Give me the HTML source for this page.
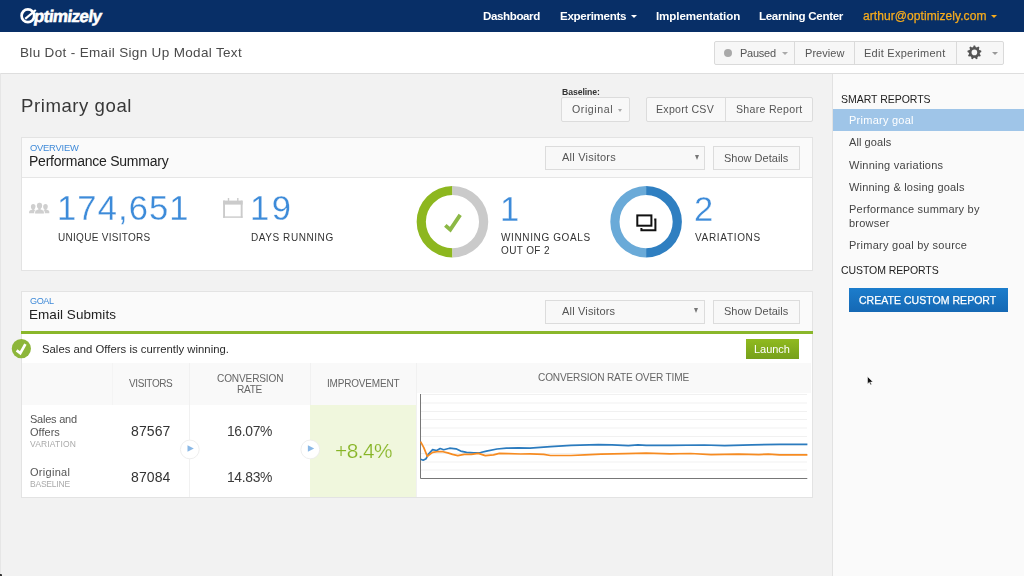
<!DOCTYPE html>
<html><head><meta charset="utf-8"><style>
html,body{margin:0;padding:0;width:1024px;height:576px;overflow:hidden;background:#f2f2f2;font-family:"Liberation Sans",sans-serif;}
.a{position:absolute;box-sizing:border-box;}
.t{position:absolute;white-space:nowrap;font-family:"Liberation Sans",sans-serif;will-change:transform;}
</style></head><body>
<!-- NAV -->
<div class="a" style="left:0;top:0;width:1024px;height:32px;background:#082f67;"></div>
<!-- logo -->
<svg class="a" style="left:18px;top:6px" width="90" height="22" viewBox="0 0 90 22">
  <ellipse cx="9.9" cy="9.8" rx="6.3" ry="6.4" fill="none" stroke="#fff" stroke-width="2.7"/>
  <path d="M7.2 12.8 L17.8 4" stroke="#fff" stroke-width="2.2"/>
  <g transform="translate(15.3 15.5) skewX(-8)"><text x="0" y="0" font-family="Liberation Sans" font-weight="bold" font-size="17" fill="#fff" stroke="#fff" stroke-width="0.55" letter-spacing="-0.6">ptimizely</text></g>
</svg>
<!-- nav carets -->
<div class="a" style="left:631.4px;top:14.8px;width:0;height:0;border-left:3px solid transparent;border-right:3px solid transparent;border-top:3.4px solid #fff;"></div>
<div class="a" style="left:990.8px;top:14.8px;width:0;height:0;border-left:3px solid transparent;border-right:3px solid transparent;border-top:3.4px solid #f8ac1c;"></div>

<!-- HEADER -->
<div class="a" style="left:0;top:32px;width:1024px;height:42px;background:#fff;border-bottom:1px solid #dedede;"></div>
<!-- button group -->
<div class="a" style="left:714px;top:41px;width:290px;height:24px;background:#f7f7f7;border:1px solid #dadada;border-radius:2px;"></div>
<div class="a" style="left:794px;top:42px;width:1px;height:22px;background:#dadada;"></div>
<div class="a" style="left:854px;top:42px;width:1px;height:22px;background:#dadada;"></div>
<div class="a" style="left:956px;top:42px;width:1px;height:22px;background:#dadada;"></div>
<div class="a" style="left:723.8px;top:49.2px;width:8px;height:8px;border-radius:50%;background:#a9a9a9;"></div>
<div class="a" style="left:782px;top:52px;width:0;height:0;border-left:3px solid transparent;border-right:3px solid transparent;border-top:3px solid #aaa;"></div>
<div class="a" style="left:992px;top:52px;width:0;height:0;border-left:3px solid transparent;border-right:3px solid transparent;border-top:3px solid #999;"></div>
<!-- gear -->
<svg class="a" style="left:964px;top:42px" width="22" height="22" viewBox="964 42 22 22">
  <polygon points="972.97,47.40 973.67,45.44 975.13,45.44 975.83,47.40 976.52,47.65 978.31,46.60 979.44,47.54 978.71,49.49 979.07,50.12 981.13,50.47 981.38,51.91 979.57,52.94 979.45,53.66 980.79,55.25 980.06,56.51 978.01,56.14 977.46,56.61 977.47,58.69 976.09,59.19 974.76,57.59 974.04,57.59 972.71,59.19 971.33,58.69 971.34,56.61 970.79,56.14 968.74,56.51 968.01,55.25 969.35,53.66 969.23,52.94 967.42,51.91 967.67,50.47 969.73,50.12 970.09,49.49 969.36,47.54 970.49,46.60 972.28,47.65" fill="#555"/>
  <circle cx="974.4" cy="52.4" r="5.4" fill="#555"/>
  <circle cx="974.4" cy="52.4" r="2.8" fill="#f7f7f7"/>
</svg>

<!-- SIDEBAR -->
<div class="a" style="left:832px;top:74px;width:192px;height:502px;background:#fafafa;border-left:1px solid #e2e2e2;"></div>
<div class="a" style="left:833px;top:109px;width:191px;height:22px;background:#9fc5e8;"></div>
<div class="a" style="left:849px;top:288px;width:159px;height:24px;background:linear-gradient(#1c7dcc,#1568b4);"></div>
<!-- page left line -->
<div class="a" style="left:0;top:73px;width:1px;height:503px;background:#e6e6e6;"></div>

<!-- MAIN TOP controls -->
<div class="a" style="left:561px;top:97px;width:69px;height:25px;background:#f8f8f8;border:1px solid #dcdcdc;border-radius:2px;"></div>
<div class="a" style="left:617.5px;top:108.8px;width:0;height:0;border-left:2.8px solid transparent;border-right:2.8px solid transparent;border-top:3px solid #aaa;"></div>
<div class="a" style="left:646px;top:97px;width:167px;height:25px;background:#f8f8f8;border:1px solid #dcdcdc;border-radius:2px;"></div>
<div class="a" style="left:725px;top:98px;width:1px;height:23px;background:#dcdcdc;"></div>

<!-- CARD 1 -->
<div class="a" style="left:21px;top:137px;width:792px;height:134px;background:#fff;border:1px solid #e3e3e3;"></div>
<div class="a" style="left:22px;top:138px;width:790px;height:40px;background:#fafafa;border-bottom:1px solid #e6e6e6;"></div>
<div class="a" style="left:545px;top:146px;width:160px;height:24px;background:#f8f8f8;border:1px solid #dcdcdc;"></div>
<div class="a" style="left:694.5px;top:154.6px;width:0;height:0;border-left:2.5px solid transparent;border-right:2.5px solid transparent;border-top:5px solid #777;"></div>
<div class="a" style="left:713px;top:146px;width:87px;height:24px;background:#f8f8f8;border:1px solid #dcdcdc;"></div>
<!-- people icon -->
<svg class="a" style="left:28px;top:201px" width="23" height="14" viewBox="28 201 23 14">
  <g fill="#cfcfcf">
    <ellipse cx="33.2" cy="206.7" rx="2.3" ry="2.6"/><rect x="32.2" y="208" width="2" height="2.5"/>
    <path d="M29.1 213.2 V211.8 Q29.3 210.2 31.6 209.8 H34.8 Q37 210.2 37 211.8 V213.2Z"/>
    <ellipse cx="45.5" cy="206.7" rx="2.3" ry="2.6"/><rect x="44.5" y="208" width="2" height="2.5"/>
    <path d="M41.6 213.2 V211.8 Q41.8 210.2 44 209.8 H47.1 Q49.2 210.2 49.3 211.8 V213.2Z"/>
    <g stroke="#fff" stroke-width="0.9">
    <ellipse cx="39.5" cy="205.8" rx="2.6" ry="3"/>
    <path d="M34.6 214 V212 Q34.8 209.8 37.6 209.3 H41.4 Q44.2 209.8 44.4 212 V214Z"/>
    </g>
    <ellipse cx="39.5" cy="205.8" rx="2.6" ry="3"/><rect x="38.3" y="207.5" width="2.4" height="2.5"/>
  </g>
</svg>
<!-- calendar icon -->
<svg class="a" style="left:220px;top:196px" width="26" height="24" viewBox="220 196 26 24">
  <g fill="#cbcbcb">
    <rect x="223.1" y="200.6" width="19.5" height="4"/>
    <rect x="223.1" y="200.6" width="1.9" height="17.2"/>
    <rect x="240.7" y="200.6" width="1.9" height="17.2"/>
    <rect x="223.1" y="216.4" width="19.5" height="1.4"/>
    <rect x="227.8" y="198" width="1.4" height="3"/>
    <rect x="237.1" y="198" width="1.4" height="3"/>
  </g>
</svg>
<!-- donut 1 -->
<svg class="a" style="left:414px;top:183px" width="76" height="76" viewBox="414 183 76 76">
  <path d="M452.45 185.89999999999998 A35.8 35.8 0 0 0 452.45 257.5 L452.45 248.29999999999998 A26.6 26.6 0 0 1 452.45 195.1 Z" fill="#8db71f"/>
  <path d="M452.45 185.89999999999998 A35.8 35.8 0 0 1 452.45 257.5 L452.45 248.29999999999998 A26.6 26.6 0 0 0 452.45 195.1 Z" fill="#cacaca"/>
  <path d="M445.3 225.4 L450.3 229.6 L460.2 214.9" fill="none" stroke="#8cb845" stroke-width="3.8"/>
</svg>
<!-- donut 2 -->
<svg class="a" style="left:608px;top:183px" width="76" height="76" viewBox="608 183 76 76">
  <path d="M646.1 185.89999999999998 A35.8 35.8 0 0 0 646.1 257.5 L646.1 248.29999999999998 A26.6 26.6 0 0 1 646.1 195.1 Z" fill="#6aaad8"/>
  <path d="M646.1 185.89999999999998 A35.8 35.8 0 0 1 646.1 257.5 L646.1 248.29999999999998 A26.6 26.6 0 0 0 646.1 195.1 Z" fill="#2f7fc1"/>
  <rect x="637.3" y="215.4" width="14.1" height="10.3" fill="none" stroke="#111" stroke-width="2"/><path d="M641.4 228 V230.2 H655.4 V219.6 H654.2" fill="none" stroke="#111" stroke-width="2"/>
</svg>

<!-- CARD 2 -->
<div class="a" style="left:21px;top:291px;width:792px;height:207px;background:#fff;border:1px solid #e3e3e3;"></div>
<div class="a" style="left:22px;top:292px;width:790px;height:39px;background:#fafafa;"></div>
<div class="a" style="left:545px;top:299.5px;width:160px;height:24px;background:#f8f8f8;border:1px solid #dcdcdc;"></div>
<div class="a" style="left:694px;top:308px;width:0;height:0;border-left:2.5px solid transparent;border-right:2.5px solid transparent;border-top:5px solid #777;"></div>
<div class="a" style="left:713px;top:299.5px;width:87px;height:24px;background:#f8f8f8;border:1px solid #dcdcdc;"></div>
<div class="a" style="left:21px;top:331px;width:792px;height:3px;background:#8ab72b;"></div>
<!-- launch -->
<div class="a" style="left:745.7px;top:339.1px;width:53.8px;height:19.7px;background:linear-gradient(#90ba1f,#76a01b);"></div>
<!-- table header bg -->
<div class="a" style="left:22px;top:363px;width:394px;height:42px;background:#f9f9f9;"></div>
<div class="a" style="left:417px;top:363px;width:394px;height:30px;background:#f9f9f9;"></div>
<!-- column dividers -->
<div class="a" style="left:112px;top:363px;width:1px;height:42px;background:#f4f4f4;"></div>
<div class="a" style="left:189px;top:363px;width:1px;height:134px;background:#f1f1f1;"></div>
<div class="a" style="left:310px;top:363px;width:1px;height:42px;background:#f1f1f1;"></div>
<div class="a" style="left:416px;top:363px;width:1px;height:134px;background:#f1f1f1;"></div>
<!-- improvement bg -->
<div class="a" style="left:310px;top:404.5px;width:106px;height:92px;background:#f0f7dd;"></div>
<!-- arrow circles -->
<svg class="a" style="left:178px;top:438px" width="24" height="24" viewBox="178 438 24 24">
  <circle cx="189.8" cy="449.45" r="9.4" fill="#fff" stroke="#ececec" stroke-width="0.9"/>
  <path d="M187.5 445.2 L193.8 448.5 L187.5 451.8Z" fill="#8ab8e6"/>
</svg>
<svg class="a" style="left:298px;top:438px" width="24" height="24" viewBox="298 438 24 24">
  <circle cx="310.3" cy="449.45" r="9.4" fill="#fff" stroke="#ececec" stroke-width="0.9"/>
  <path d="M307.9 445.2 L314.2 448.5 L307.9 451.8Z" fill="#8ab8e6"/>
</svg>
<!-- winning check -->
<svg class="a" style="left:9px;top:336px" width="26" height="26" viewBox="9 336 26 26">
  <ellipse cx="21.35" cy="348.65" rx="9.6" ry="9.7" fill="#8db63a"/>
  <path d="M16.6 350.4 L20.3 353.2 L25.4 344.2" fill="none" stroke="#fff" stroke-width="2.7" stroke-linejoin="miter"/>
</svg>
<!-- chart -->
<svg class="a" style="left:417px;top:390px" width="395" height="92" viewBox="417 390 395 92">
  <g stroke="#f1f1f1" stroke-width="1">
    <path d="M421 394.5 H807 M421 403 H807 M421 411.5 H807 M421 419.5 H807 M421 428 H807 M421 436.5 H807 M421 445 H807 M421 453.5 H807 M421 462 H807 M421 470 H807"/>
  </g>
  <path d="M420.5 394 V478.5 H807.3" fill="none" stroke="#777" stroke-width="1"/>
  <path d="M420.6 459.3 L423.2 460.2 L426.1 458.7 L428.5 454 L432.6 449.7 L436.7 450.5 L440.2 448.5 L443.7 449.7 L449.6 448.2 L456 448.8 L460.7 451.1 L466.6 452.3 L473.6 452.9 L480.6 452.5 L486.5 451.1 L497 449 L506.4 448.2 L518.2 447.8 L530 448.1 L550.5 446.6 L571 445.3 L598.4 444.6 L612 444.8 L628.4 445.7 L638 444.8 L646.2 445.4 L670 445.4 L704.2 445 L724.7 445.7 L752 444.8 L779.4 444.3 L807.4 444.3" fill="none" stroke="#2b7bbe" stroke-width="1.7" stroke-linejoin="round"/>
  <path d="M420.6 441.7 L423.8 447.6 L427.3 456.4 L432.6 452.3 L438.4 451.5 L443.1 451.7 L447.8 452.9 L452.5 454.4 L457.8 455.6 L464.2 454.4 L471.3 454.3 L478.3 453.4 L485.3 455.6 L493.5 454.9 L499.4 453.4 L508.8 453.7 L520.5 454 L530 453.9 L543.7 454.4 L550.5 455.5 L571 455.5 L584.7 454.8 L601 454.1 L625.7 453.6 L646.2 453.2 L670 453.8 L690.5 453.5 L711 454.6 L738.4 454.1 L758.9 454.6 L768.4 454.1 L779.4 454.8 L807.4 454.8" fill="none" stroke="#f68b21" stroke-width="1.7" stroke-linejoin="round"/>
</svg>
<!-- cursor -->
<svg class="a" style="left:866px;top:375px" width="10" height="12" viewBox="0 0 10 12">
  <path d="M1.5 1.5 L1.5 9 L3.3 7.3 L4.6 10 L5.6 9.5 L4.5 7 L7 7 Z" fill="#111" stroke="#fff" stroke-width="0.5"/>
</svg>

<div class="a" style="left:0;top:574px;width:2px;height:2px;background:#333;border-radius:0 1px 0 0;"></div>

<div class="t" style="left:483.40px;top:10.00px;font-size:11.6px;line-height:11.6px;font-weight:bold;color:#fff;letter-spacing:-0.409px;">Dashboard</div>
<div class="t" style="left:560.20px;top:10.00px;font-size:11.6px;line-height:11.6px;font-weight:bold;color:#fff;letter-spacing:-0.314px;">Experiments</div>
<div class="t" style="left:656.40px;top:10.00px;font-size:11.6px;line-height:11.6px;font-weight:bold;color:#fff;letter-spacing:-0.107px;">Implementation</div>
<div class="t" style="left:759.40px;top:10.00px;font-size:11.6px;line-height:11.6px;font-weight:bold;color:#fff;letter-spacing:-0.328px;">Learning Center</div>
<div class="t" style="left:863.00px;top:10.00px;font-size:12px;line-height:12px;font-weight:normal;color:#f8ac1c;letter-spacing:0.070px;-webkit-text-stroke:0.25px #f8ac1c;">arthur@optimizely.com</div>
<div class="t" style="left:20.00px;top:46.00px;font-size:13.5px;line-height:13.5px;font-weight:normal;color:#4a4a4a;letter-spacing:0.337px;">Blu Dot - Email Sign Up Modal Text</div>
<div class="t" style="left:739.70px;top:48.00px;font-size:11px;line-height:11px;font-weight:normal;color:#555;letter-spacing:-0.258px;">Paused</div>
<div class="t" style="left:804.50px;top:48.00px;font-size:11px;line-height:11px;font-weight:normal;color:#555;letter-spacing:0.053px;">Preview</div>
<div class="t" style="left:864.40px;top:48.00px;font-size:11px;line-height:11px;font-weight:normal;color:#555;letter-spacing:0.258px;">Edit Experiment</div>
<div class="t" style="left:20.70px;top:97.00px;font-size:18.6px;line-height:18.6px;font-weight:normal;color:#383838;letter-spacing:0.552px;-webkit-text-stroke:0 #f2f2f2;">Primary goal</div>
<div class="t" style="left:562.00px;top:88.00px;font-size:8.7px;line-height:8.7px;font-weight:bold;color:#333;letter-spacing:-0.079px;">Baseline:</div>
<div class="t" style="left:571.60px;top:104.00px;font-size:10.6px;line-height:10.6px;font-weight:normal;color:#555;letter-spacing:0.579px;">Original</div>
<div class="t" style="left:656.30px;top:104.00px;font-size:10.6px;line-height:10.6px;font-weight:normal;color:#555;letter-spacing:0.269px;">Export CSV</div>
<div class="t" style="left:735.60px;top:104.00px;font-size:10.6px;line-height:10.6px;font-weight:normal;color:#555;letter-spacing:0.285px;">Share Report</div>
<div class="t" style="left:29.50px;top:143.00px;font-size:9.4px;line-height:9.4px;font-weight:normal;color:#3f8ad8;letter-spacing:-0.230px;">OVERVIEW</div>
<div class="t" style="left:28.50px;top:154.00px;font-size:14px;line-height:14px;font-weight:normal;color:#222;letter-spacing:-0.235px;">Performance Summary</div>
<div class="t" style="left:562.00px;top:152.00px;font-size:11px;line-height:11px;font-weight:normal;color:#555;letter-spacing:0.232px;">All Visitors</div>
<div class="t" style="left:724.00px;top:153.00px;font-size:11px;line-height:11px;font-weight:normal;color:#555;letter-spacing:0.010px;">Show Details</div>
<div class="t" style="left:57.00px;top:191.00px;font-size:34.5px;line-height:34.5px;font-weight:normal;color:#3d8bd9;letter-spacing:1.130px;-webkit-text-stroke:0.3px #fff;">174,651</div>
<div class="t" style="left:57.80px;top:233.00px;font-size:10px;line-height:10px;font-weight:normal;color:#333;letter-spacing:0.293px;">UNIQUE VISITORS</div>
<div class="t" style="left:250.20px;top:191.00px;font-size:34.5px;line-height:34.5px;font-weight:normal;color:#3d8bd9;letter-spacing:2.613px;-webkit-text-stroke:0.3px #fff;">19</div>
<div class="t" style="left:251.00px;top:233.00px;font-size:10px;line-height:10px;font-weight:normal;color:#333;letter-spacing:0.568px;">DAYS RUNNING</div>
<div class="t" style="left:500.30px;top:192.00px;font-size:34.5px;line-height:34.5px;font-weight:normal;color:#3d8bd9;letter-spacing:0.000px;-webkit-text-stroke:0.3px #fff;">1</div>
<div class="t" style="left:500.70px;top:233.00px;font-size:10px;line-height:10px;font-weight:normal;color:#333;letter-spacing:0.625px;">WINNING GOALS</div>
<div class="t" style="left:500.70px;top:246.00px;font-size:10px;line-height:10px;font-weight:normal;color:#333;letter-spacing:0.378px;">OUT OF 2</div>
<div class="t" style="left:694.30px;top:192.00px;font-size:34.5px;line-height:34.5px;font-weight:normal;color:#3d8bd9;letter-spacing:0.000px;-webkit-text-stroke:0.3px #fff;">2</div>
<div class="t" style="left:694.70px;top:233.00px;font-size:10px;line-height:10px;font-weight:normal;color:#333;letter-spacing:0.676px;">VARIATIONS</div>
<div class="t" style="left:29.50px;top:297.00px;font-size:9.1px;line-height:9.1px;font-weight:normal;color:#3f8ad8;letter-spacing:-0.404px;">GOAL</div>
<div class="t" style="left:28.50px;top:308.00px;font-size:13.5px;line-height:13.5px;font-weight:normal;color:#222;letter-spacing:0.056px;">Email Submits</div>
<div class="t" style="left:562.20px;top:306.00px;font-size:11px;line-height:11px;font-weight:normal;color:#555;letter-spacing:0.178px;">All Visitors</div>
<div class="t" style="left:724.00px;top:306.00px;font-size:11px;line-height:11px;font-weight:normal;color:#555;letter-spacing:0.000px;">Show Details</div>
<div class="t" style="left:41.70px;top:344.00px;font-size:11.3px;line-height:11.3px;font-weight:normal;color:#2a2a2a;letter-spacing:0.018px;">Sales and Offers is currently winning.</div>
<div class="t" style="left:754.40px;top:344.00px;font-size:11px;line-height:11px;font-weight:normal;color:#fff;letter-spacing:-0.034px;">Launch</div>
<div class="t" style="left:128.90px;top:379.00px;font-size:10px;line-height:10px;font-weight:normal;color:#666;letter-spacing:-0.389px;">VISITORS</div>
<div class="t" style="left:217.10px;top:374.00px;font-size:10.1px;line-height:10.1px;font-weight:normal;color:#666;letter-spacing:-0.152px;">CONVERSION</div>
<div class="t" style="left:237.40px;top:385.00px;font-size:10.1px;line-height:10.1px;font-weight:normal;color:#666;letter-spacing:-0.279px;">RATE</div>
<div class="t" style="left:327.20px;top:379.00px;font-size:10px;line-height:10px;font-weight:normal;color:#666;letter-spacing:-0.184px;">IMPROVEMENT</div>
<div class="t" style="left:538.30px;top:373.00px;font-size:10.1px;line-height:10.1px;font-weight:normal;color:#666;letter-spacing:-0.155px;">CONVERSION RATE OVER TIME</div>
<div class="t" style="left:29.70px;top:414.00px;font-size:11px;line-height:11px;font-weight:normal;color:#555;letter-spacing:-0.238px;">Sales and</div>
<div class="t" style="left:29.70px;top:427.00px;font-size:11px;line-height:11px;font-weight:normal;color:#555;letter-spacing:0.010px;">Offers</div>
<div class="t" style="left:29.70px;top:440.00px;font-size:8.5px;line-height:8.5px;font-weight:normal;color:#aaa;letter-spacing:0.161px;">VARIATION</div>
<div class="t" style="left:131.00px;top:424.00px;font-size:14px;line-height:14px;font-weight:normal;color:#333;letter-spacing:0.114px;">87567</div>
<div class="t" style="left:29.70px;top:467.00px;font-size:11px;line-height:11px;font-weight:normal;color:#555;letter-spacing:0.291px;">Original</div>
<div class="t" style="left:29.70px;top:480.00px;font-size:8.5px;line-height:8.5px;font-weight:normal;color:#aaa;letter-spacing:-0.215px;">BASELINE</div>
<div class="t" style="left:131.00px;top:470.00px;font-size:14px;line-height:14px;font-weight:normal;color:#333;letter-spacing:0.114px;">87084</div>
<div class="t" style="left:227.30px;top:425.00px;font-size:13.9px;line-height:13.9px;font-weight:normal;color:#3a3a3a;letter-spacing:-0.352px;">16.07%</div>
<div class="t" style="left:227.30px;top:471.00px;font-size:13.9px;line-height:13.9px;font-weight:normal;color:#3a3a3a;letter-spacing:-0.352px;">14.83%</div>
<div class="t" style="left:334.80px;top:441.00px;font-size:20.8px;line-height:20.8px;font-weight:normal;color:#86b425;letter-spacing:-0.489px;-webkit-text-stroke:0.2px #f0f7dd;">+8.4%</div>
<div class="t" style="left:840.50px;top:94.00px;font-size:10.5px;line-height:10.5px;font-weight:normal;color:#222;letter-spacing:-0.020px;">SMART REPORTS</div>
<div class="t" style="left:849.30px;top:115.00px;font-size:11px;line-height:11px;font-weight:normal;color:#fff;letter-spacing:0.255px;">Primary goal</div>
<div class="t" style="left:849.30px;top:137.00px;font-size:11px;line-height:11px;font-weight:normal;color:#444;letter-spacing:0.078px;">All goals</div>
<div class="t" style="left:849.30px;top:160.00px;font-size:11px;line-height:11px;font-weight:normal;color:#444;letter-spacing:0.249px;">Winning variations</div>
<div class="t" style="left:849.30px;top:182.00px;font-size:11px;line-height:11px;font-weight:normal;color:#444;letter-spacing:0.201px;">Winning &amp; losing goals</div>
<div class="t" style="left:849.30px;top:204.00px;font-size:11px;line-height:11px;font-weight:normal;color:#444;letter-spacing:0.213px;">Performance summary by</div>
<div class="t" style="left:849.30px;top:218.00px;font-size:11px;line-height:11px;font-weight:normal;color:#444;letter-spacing:0.223px;">browser</div>
<div class="t" style="left:849.30px;top:240.00px;font-size:11px;line-height:11px;font-weight:normal;color:#444;letter-spacing:0.259px;">Primary goal by source</div>
<div class="t" style="left:840.60px;top:265.00px;font-size:10.5px;line-height:10.5px;font-weight:normal;color:#222;letter-spacing:-0.084px;">CUSTOM REPORTS</div>
<div class="t" style="left:859.30px;top:295.00px;font-size:10.5px;line-height:10.5px;font-weight:normal;color:#fff;letter-spacing:0.037px;-webkit-text-stroke:0.25px #fff;">CREATE CUSTOM REPORT</div>
</body></html>
